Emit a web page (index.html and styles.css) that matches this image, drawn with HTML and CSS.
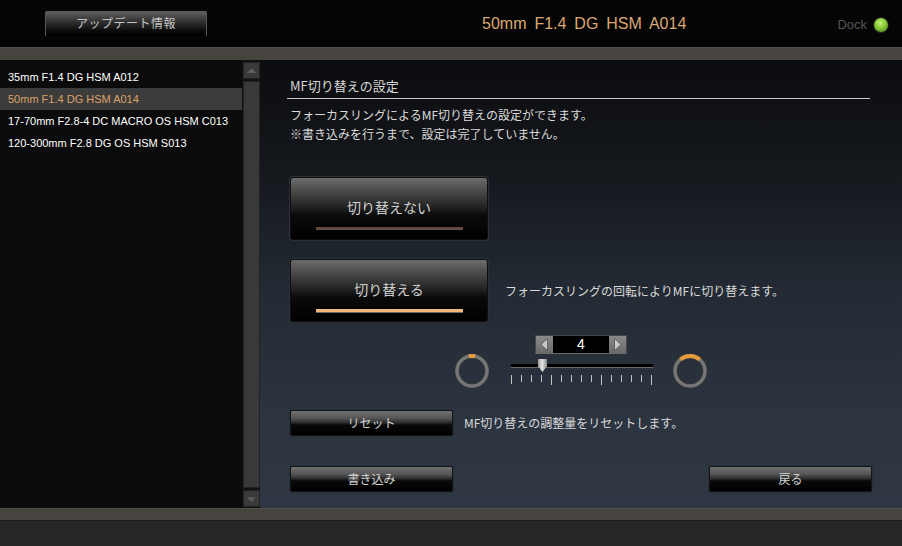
FILE: index.html
```html
<!DOCTYPE html>
<html lang="ja">
<head>
<meta charset="utf-8">
<title>MF切り替えの設定</title>
<link rel="stylesheet" href="styles.css">
</head>
<body>
<div class="app">
  <header class="header">
    <div class="update-btn">アップデート情報</div>
    <div class="lens-title">50mm F1.4 DG HSM A014</div>
    <div class="dock">
      <span class="dock-label">Dock</span>
      <span class="dock-dot"></span>
    </div>
  </header>
  <div class="bar"></div>
  <div class="middle">
    <aside class="sidebar">
      <ul class="lens-list">
        <li class="lens-item">35mm F1.4 DG HSM A012</li>
        <li class="lens-item selected">50mm F1.4 DG HSM A014</li>
        <li class="lens-item">17-70mm F2.8-4 DC MACRO OS HSM C013</li>
        <li class="lens-item">120-300mm F2.8 DG OS HSM S013</li>
      </ul>
    </aside>
    <div class="scrollbar">
      <div class="sb-btn">
        <svg width="16" height="16" viewBox="0 0 16 16"><polygon points="3,10 13,10 8,5" fill="#5e5e5e"/></svg>
      </div>
      <div class="sb-track"></div>
      <div class="sb-btn">
        <svg width="16" height="16" viewBox="0 0 16 16"><polygon points="3,6 13,6 8,11" fill="#5e5e5e"/></svg>
      </div>
    </div>
    <main class="main">
      <h1 class="section-title">MF切り替えの設定</h1>
      <p class="desc">フォーカスリングによるMF切り替えの設定ができます。<br>※書き込みを行うまで、設定は完了していません。</p>

      <div class="big-row first">
        <div class="big-btn">
          <span class="big-label">切り替えない</span>
          <span class="big-line"></span>
        </div>
      </div>
      <div class="big-row second">
        <div class="big-btn active">
          <span class="big-label">切り替える</span>
          <span class="big-line"></span>
        </div>
        <span class="note">フォーカスリングの回転によりMFに切り替えます。</span>
      </div>

      <div class="slider-row">
        <svg class="ring" width="34" height="34" viewBox="0 0 34 34">
          <circle cx="17" cy="17" r="15" fill="none" stroke="#3a3a3a" stroke-width="5"/>
          <circle cx="17" cy="17" r="15" fill="none" stroke="#767676" stroke-width="3.4"/>
          <path d="M13.88 2.33 A15 15 0 0 1 20.12 2.33" fill="none" stroke="#e69a3a" stroke-width="4"/>
        </svg>
        <div class="slider-col">
          <div class="num-box">
            <span class="num-arrow">
              <svg width="17" height="17" viewBox="0 0 17 17"><polygon points="11.5,2.5 11.5,14.5 5,8.5" fill="#c8c8c8" stroke="#555" stroke-width="0.8"/></svg>
            </span>
            <span class="num-value">4</span>
            <span class="num-arrow">
              <svg width="17" height="17" viewBox="0 0 17 17"><polygon points="5.5,2.5 5.5,14.5 12,8.5" fill="#c8c8c8" stroke="#555" stroke-width="0.8"/></svg>
            </span>
          </div>
          <div class="track">
            <span class="thumb"></span>
          </div>
          <div class="ticks">
            <span class="tick mid"></span><span class="tick"></span><span class="tick"></span><span class="tick"></span><span class="tick long"></span>
            <span class="tick"></span><span class="tick"></span><span class="tick"></span><span class="tick"></span><span class="tick long"></span>
            <span class="tick"></span><span class="tick"></span><span class="tick"></span><span class="tick"></span><span class="tick long"></span>
          </div>
        </div>
        <svg class="ring" width="34" height="34" viewBox="0 0 34 34">
          <circle cx="17" cy="17" r="15" fill="none" stroke="#3a3a3a" stroke-width="5"/>
          <circle cx="17" cy="17" r="15" fill="none" stroke="#767676" stroke-width="3.4"/>
          <path d="M7.36 5.51 A15 15 0 0 1 26.64 5.51" fill="none" stroke="#e69a3a" stroke-width="4"/>
        </svg>
      </div>

      <div class="reset-row">
        <div class="small-btn">リセット</div>
        <span class="note">MF切り替えの調整量をリセットします。</span>
      </div>

      <div class="bottom-row">
        <div class="small-btn">書き込み</div>
        <div class="small-btn">戻る</div>
      </div>
    </main>
  </div>
  <div class="bar bottom"></div>
  <footer class="footer"></footer>
</div>
</body>
</html>
```

FILE: styles.css
```css
* { box-sizing: border-box; }

html, body {
  margin: 0;
  padding: 0;
  background: #262626;
}

body {
  font-family: "Liberation Sans", "Noto Sans CJK JP", sans-serif;
  width: 902px;
  height: 546px;
  overflow: hidden;
}

.app {
  width: 902px;
  height: 546px;
  display: flex;
  flex-direction: column;
}

/* header */
.header {
  height: 47px;
  background: #050505;
  display: flex;
  align-items: flex-start;
  padding-left: 45px;
}

.update-btn {
  margin-top: 11px;
  width: 162px;
  height: 25px;
  border: 1px solid #5a5a5a;
  border-bottom: none;
  border-radius: 2px 2px 0 0;
  background: linear-gradient(#5e5e5e 0%, #2c2c2c 45%, #0a0a0a 80%, #000 100%);
  color: #c4c4c4;
  font-family: "Noto Sans CJK JP", sans-serif;
  font-size: 12px;
  line-height: 22px;
  text-align: center;
  letter-spacing: 0.5px;
}

.lens-title {
  margin-left: 275px;
  margin-top: 14px;
  color: #dda874;
  font-size: 16px;
  line-height: 20px;
  word-spacing: 3.5px;
}

.dock {
  margin-left: auto;
  margin-right: 14px;
  margin-top: 17px;
  display: flex;
  align-items: center;
  gap: 7px;
}

.dock-label {
  color: #555;
  font-size: 13px;
  line-height: 16px;
}

.dock-dot {
  width: 14px;
  height: 14px;
  border-radius: 50%;
  background: radial-gradient(circle at 45% 35%, #c8f080 0%, #8ccf3a 40%, #5e9a20 80%);
  box-shadow: 0 1px 1px #2a2a2a, 0 0 0 1px #1a1a1a;
}

/* grey bars */
.bar {
  height: 13px;
  background: #47443f;
  border-top: 1px solid #524f4a;
}

.bar.bottom {
  border-bottom: 1px solid #1a1a1a;
  height: 13px;
}

.footer {
  flex: 1;
  background: #262626;
}

/* middle */
.middle {
  height: 448px;
  display: flex;
}

.sidebar {
  width: 242px;
  background: #0b0b0b;
}

.lens-list {
  list-style: none;
  margin: 0;
  padding: 6px 0 0;
}

.lens-item {
  height: 22px;
  line-height: 22px;
  padding-left: 8px;
  font-size: 11px;
  color: #fff;
  white-space: nowrap;
}

.lens-item.selected {
  background: #3c3c3c;
  color: #dba066;
}

.scrollbar {
  width: 18px;
  background: #111;
  display: flex;
  flex-direction: column;
  padding: 2px 0 1px 1px;
  gap: 2px;
}

.sb-btn {
  height: 17px;
  background: #3a3a3a;
  border: 1px solid #222;
  display: flex;
  align-items: center;
  justify-content: center;
}

.sb-track {
  flex: 1;
  background: #393939;
  border: 1px solid #222;
}

/* main */
.main {
  flex: 1;
  padding: 18px 30px 0 27px;
  background: linear-gradient(#0b0c0e 0%, #15181d 25%, #232a33 51%, #2c3440 80%, #2f3744 100%);
  font-family: "Noto Sans CJK JP", sans-serif;
  color: #d6d6d6;
}

.section-title {
  margin: 0 2px 0 0;
  padding: 0 0 4px 3px;
  font-size: 13px;
  font-weight: normal;
  line-height: 16px;
  color: #d8d8d8;
  border-bottom: 1px solid #c8c8c8;
}

.desc {
  margin: 6px 0 0;
  padding-left: 3px;
  font-size: 12px;
  line-height: 19px;
  color: #dcdcdc;
}

.big-row {
  display: flex;
  align-items: center;
  padding-left: 3px;
  gap: 17px;
}

.big-row.first { margin-top: 34px; }
.big-row.second { margin-top: 19px; }

.big-btn {
  position: relative;
  width: 198px;
  height: 63px;
  border: 1px solid #0e0e0e;
  border-radius: 3px;
  background: linear-gradient(#6c6c6c 0%, #444 25%, #262626 45%, #0a0a0a 62%, #000 100%);
  box-shadow: 0 0 0 1px #2a3038;
  display: flex;
  flex-direction: column;
  align-items: center;
}

.big-label {
  margin-top: 20px;
  font-size: 14px;
  line-height: 18px;
  color: #d0d0d0;
}

.big-line {
  margin-top: 11px;
  width: 147px;
  height: 3px;
  background: #654636;
  border-bottom: 1px solid #555;
}

.big-btn.active .big-line {
  background: #f2b77c;
  height: 4px;
  border-bottom: 1px solid #6a6a6a;
}

.note {
  font-size: 12px;
  line-height: 16px;
  color: #dadada;
}

/* slider */
.slider-row {
  margin-top: 13px;
  margin-left: 168px;
  display: flex;
  align-items: flex-start;
}

.ring {
  margin-top: 19px;
  display: block;
}

.slider-col {
  width: 142px;
  margin-left: 22px;
  margin-right: 20px;
}

.num-box {
  margin-left: 24px;
  width: 92px;
  height: 19px;
  background: #000;
  border: 1px solid #484848;
  border-bottom-color: #6a6a6a;
  display: flex;
  align-items: stretch;
}

.num-arrow {
  width: 17px;
  background: linear-gradient(#8a8a8a, #6a6a6a);
  display: flex;
  align-items: center;
  justify-content: center;
}

.num-value {
  flex: 1;
  text-align: center;
  color: #fff;
  font-family: "Liberation Sans", sans-serif;
  font-size: 14px;
  line-height: 17px;
}

.track {
  position: relative;
  margin-top: 10px;
  height: 4px;
  background: #000;
  border-bottom: 1px solid #6a6a6a;
}

.thumb {
  position: absolute;
  left: 27px;
  top: -5px;
  width: 9px;
  height: 13px;
  background: linear-gradient(90deg, #9a9a9a, #e6e6e6 45%, #8a8a8a);
  clip-path: polygon(0 0, 100% 0, 100% 55%, 50% 100%, 0 55%);
}

.ticks {
  margin-top: 7px;
  height: 10px;
  display: flex;
  justify-content: space-between;
  align-items: flex-start;
  width: 141px;
}

.tick {
  width: 1px;
  height: 7px;
  background: #c4c4c4;
}

.tick.mid { height: 9px; }
.tick.long { height: 10px; }

/* small buttons */
.reset-row {
  margin-top: 22px;
  padding-left: 3px;
  display: flex;
  align-items: center;
  gap: 11px;
}

.small-btn {
  width: 163px;
  height: 26px;
  border: 1px solid #141414;
  border-radius: 2px;
  background: linear-gradient(#717171 0%, #555 30%, #2e2e2e 48%, #0a0a0a 58%, #000 100%);
  box-shadow: 0 0 0 1px #283038;
  color: #d4d4d4;
  font-size: 12px;
  line-height: 24px;
  text-align: center;
}

.bottom-row {
  margin-top: 30px;
  padding-left: 3px;
  display: flex;
  justify-content: space-between;
}
```
